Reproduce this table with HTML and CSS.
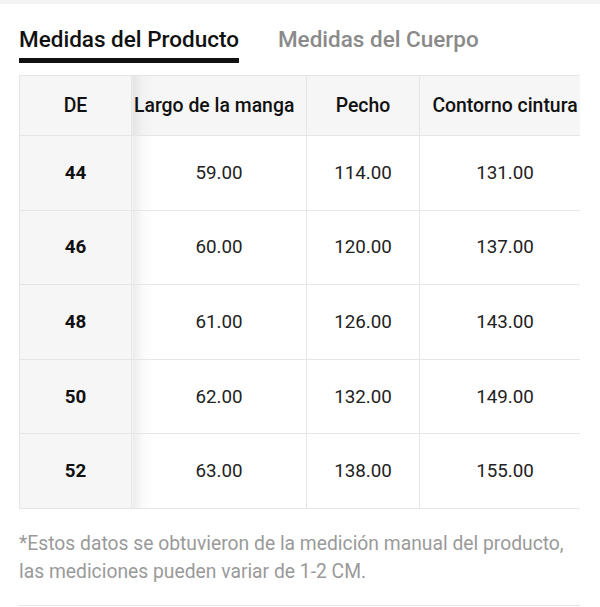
FILE: index.html
```html
<!DOCTYPE html>
<html lang="es">
<head>
<meta charset="utf-8">
<link rel="stylesheet" href="styles.css">
</head>
<body>
<div class="topband"></div>
<div class="wrap">
  <div class="tabs">
    <div class="tab active">Medidas del Producto</div>
    <div class="tab">Medidas del Cuerpo</div>
  </div>
  <div class="table-box">
    <table class="sizes">
      <thead>
        <tr><th class="c1">DE</th><th class="c2">Largo de la manga</th><th class="c3">Pecho</th><th class="c4">Contorno cintura</th></tr>
      </thead>
      <tbody>
        <tr><td class="c1">44</td><td class="c2">59.00</td><td class="c3">114.00</td><td class="c4">131.00</td></tr>
        <tr><td class="c1">46</td><td class="c2">60.00</td><td class="c3">120.00</td><td class="c4">137.00</td></tr>
        <tr><td class="c1">48</td><td class="c2">61.00</td><td class="c3">126.00</td><td class="c4">143.00</td></tr>
        <tr><td class="c1">50</td><td class="c2">62.00</td><td class="c3">132.00</td><td class="c4">149.00</td></tr>
        <tr><td class="c1">52</td><td class="c2">63.00</td><td class="c3">138.00</td><td class="c4">155.00</td></tr>
      </tbody>
    </table>
  </div>
  <p class="note">*Estos datos se obtuvieron de la medición manual del producto, las mediciones pueden variar de 1-2 CM.</p>
  <div class="bottomline"></div>
</div>
</body>
</html>
```
FILE: styles.css
```css
html, body {
  margin: 0;
  padding: 0;
  background: #fff;
  font-family: Roboto, "Liberation Sans", sans-serif;
  color: #222;
}
.topband {
  height: 4px;
  background: #f3f3f3;
}
.wrap {
  padding: 0 20px 0 19px;
}
.tabs {
  display: flex;
  gap: 39px;
  margin-top: 22px;
}
.tab {
  font-size: 22.5px;
  line-height: 26px;
  font-weight: 500;
  color: #8a8a8a;
  padding-bottom: 6px;
  border-bottom: 5px solid transparent;
}
.tab.active {
  color: #111;
  border-bottom-color: #111;
}
.table-box {
  margin-top: 12px;
  width: 561px;
  overflow: hidden;
}
.sizes {
  border-collapse: collapse;
  width: 570px;
  table-layout: fixed;
}
.sizes th, .sizes td {
  border: 1px solid #e6e6e6;
  text-align: center;
  padding: 0;
}
.sizes th {
  height: 59px;
  background: #f6f6f6;
  font-size: 19.4px;
  font-weight: 500;
  color: #111;
  white-space: nowrap;
}
.sizes th.c2 {
  text-align: left;
  padding-left: 2px;
}
.sizes td {
  height: 73.6px;
  font-size: 18.8px;
  color: #222;
}
.sizes td.c1 {
  background: #f6f6f6;
  font-weight: 700;
  color: #111;
}
.sizes td.c2 {
  background: linear-gradient(to right, #ebebeb 0, #fafafa 10px, #fff 22px);
}
.sizes th.c2 {
  background: linear-gradient(to right, #e4e4e4 0, #f2f2f2 10px, #f6f6f6 22px);
}
.sizes .c1 { width: 111px; }
.sizes .c2 { width: 172px; }
.sizes .c3 { width: 112px; }
.sizes .c4 { width: 170px; }
.note {
  margin: 21px 0 0;
  font-size: 19.3px;
  line-height: 28px;
  color: #9a9a9a;
}
.bottomline {
  margin-top: 19px;
  height: 1px;
  width: 561px;
  background: #e4e4e4;
}
```
